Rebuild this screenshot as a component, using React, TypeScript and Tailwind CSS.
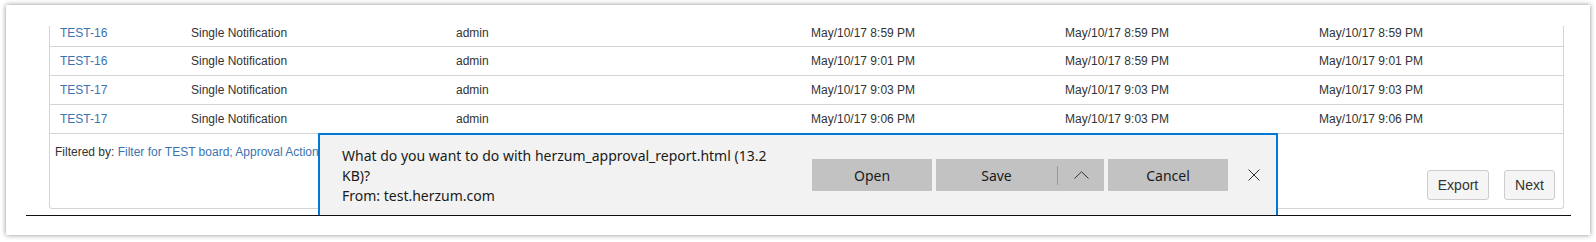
import React from "react";

const rows = [
  ["TEST-16", "Single Notification", "admin", "May/10/17 8:59 PM", "May/10/17 8:59 PM", "May/10/17 8:59 PM"],
  ["TEST-16", "Single Notification", "admin", "May/10/17 9:01 PM", "May/10/17 8:59 PM", "May/10/17 9:01 PM"],
  ["TEST-17", "Single Notification", "admin", "May/10/17 9:03 PM", "May/10/17 9:03 PM", "May/10/17 9:03 PM"],
  ["TEST-17", "Single Notification", "admin", "May/10/17 9:06 PM", "May/10/17 9:03 PM", "May/10/17 9:06 PM"],
];

function Row({ cells, first }: { cells: string[]; first?: boolean }) {
  return (
    <div
      className={
        "grid grid-cols-[131px_265px_355px_254px_254px_1fr] pl-[10px] border-b border-[#d4d4d4] text-[12px] leading-[14px] text-[#333] " +
        (first ? "h-[21px] items-start" : "h-[29px] items-center")
      }
    >
      <span className="text-[#3b73af]">{cells[0]}</span>
      <span>{cells[1]}</span>
      <span>{cells[2]}</span>
      <span>{cells[3]}</span>
      <span>{cells[4]}</span>
      <span>{cells[5]}</span>
    </div>
  );
}

function DownloadBar() {
  return (
    <div className="absolute left-[312px] top-[128px] w-[960px] h-[82px] bg-[#f2f2f2] border-t-2 border-l-2 border-r-2 border-[#0078d7] flex font-['Noto_Sans',sans-serif] text-[#1a1a1a]">
      <div className="w-[492px] pl-[22px] pt-[11px] text-[14px] leading-[20px] whitespace-nowrap">
        <div>What do you want to do with herzum_approval_report.html (13.2</div>
        <div>KB)?</div>
        <div>From: test.herzum.com</div>
      </div>
      <div className="pt-[24px] flex items-start gap-[4px] text-[14px]">
        <button className="w-[120px] h-[32px] bg-[#c2c2c2] flex items-center justify-center">Open</button>
        <div className="w-[168px] h-[32px] bg-[#c2c2c2] flex items-center">
          <span className="w-[121px] text-center">Save</span>
          <span className="w-px h-[19px] bg-[#9a9a9a]" />
          <span className="flex-1 flex justify-center">
            <svg width="15" height="8" viewBox="0 0 15 8" fill="none" stroke="#333" strokeWidth="1">
              <path d="M0.5 7.5 L7.5 0.8 L14.5 7.5" />
            </svg>
          </span>
        </div>
        <button className="w-[120px] h-[32px] bg-[#c2c2c2] flex items-center justify-center">Cancel</button>
        <div className="h-[32px] flex items-center ml-[16px]">
          <svg width="12" height="12" viewBox="0 0 12 12" stroke="#333" strokeWidth="1">
            <path d="M0.5 0.5 L11.5 11.5 M11.5 0.5 L0.5 11.5" />
          </svg>
        </div>
      </div>
    </div>
  );
}

export default function App() {
  return (
    <div className="w-[1596px] h-[242px] bg-white pt-[5px] pl-[6px] font-['Liberation_Sans',Arial,sans-serif]">
      <div className="relative w-[1584px] h-[230px] bg-white shadow-[0_0_5px_rgba(0,0,0,0.45)]">
        <div className="ml-[43px] pt-[21px]">
          <div className="w-[1515px] border-l border-r border-b border-[#d4d4d4] rounded-b-[3px]">
            {rows.map((r, i) => (
              <Row key={i} cells={r} first={i === 0} />
            ))}
            <div className="h-[74px] pt-[11px] pr-[8px] flex flex-col">
              <div className="ml-[5px] w-[263px] overflow-hidden text-[12px] leading-[14px] text-[#333] whitespace-nowrap">
                Filtered by:{" "}
                <span className="text-[#3b73af]">Filter for TEST board; Approval Action: Single Notification</span>
              </div>
              <div className="mt-[11px] flex justify-end gap-[15px] text-[14px] text-[#333]">
                <button className="w-[62px] h-[30px] bg-[#f5f5f5] border border-[#ccc] rounded-[3px]">Export</button>
                <button className="w-[51px] h-[30px] bg-[#f5f5f5] border border-[#ccc] rounded-[3px]">Next</button>
              </div>
            </div>
          </div>
        </div>
        <div className="ml-[20px] mt-[6px] w-[1545px] h-px bg-[#111]" />
        <DownloadBar />
      </div>
    </div>
  );
}
